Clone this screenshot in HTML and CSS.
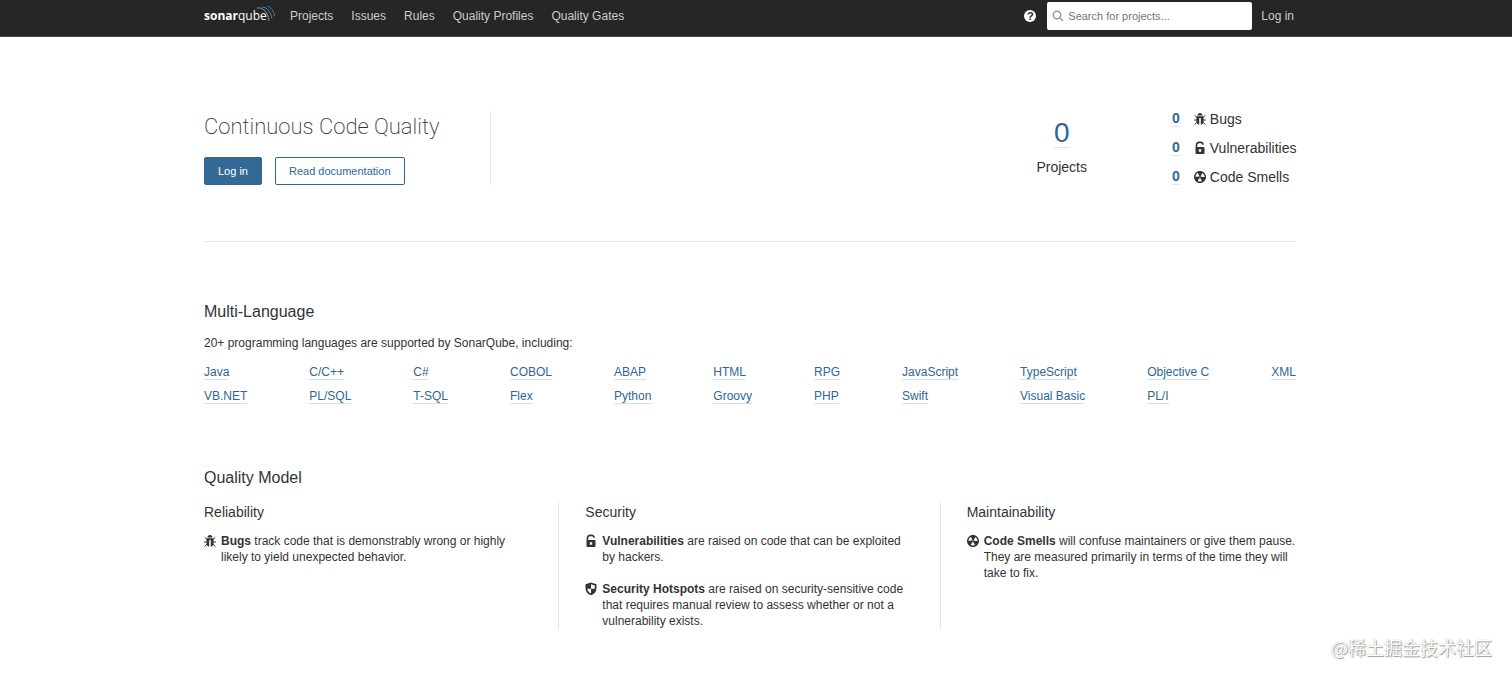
FILE: index.html
```html
<!DOCTYPE html>
<html lang="en">
<head>
  <meta charset="UTF-8">
  <meta name="viewport" content="width=device-width, initial-scale=1.0">
  <title>SonarQube</title>
  <link rel="stylesheet" href="styles.css">
</head>
<body>
  <!-- icons shared by the page -->
  <svg class="sprite" aria-hidden="true">
    <symbol id="icon-bug" viewBox="2 2 12 12" overflow="visible">
      <path d="M5.500 4.500C5.500 3 6.500 2 8 2s2.500 1 2.500 2.500zM4.500 5.300h7v5.200c0 1.600-.8 2.700-2.700 3.200V7H7.200v6.700c-1.900-.5-2.700-1.600-2.700-3.200z"/>
      <path d="M5 6.500L2.700 4.300M11 6.500l2.300-2.200M5 9H2M11 9h3M5 11l-2.300 2.500M11 11l2.300 2.500" fill="none" stroke="currentColor"/>
    </symbol>
    <symbol id="icon-lock" viewBox="2 2 12 12" overflow="visible">
      <path d="M4.500 8V4.900a2.500 2.500 0 0 1 2.500-2.500h1.800a2.300 2.300 0 0 1 2.300 2.300" fill="none" stroke="currentColor" stroke-width="1.600"/>
      <path fill-rule="evenodd" d="M4.500 7h7a1 1 0 0 1 1 1v5a1 1 0 0 1-1 1h-7a1 1 0 0 1-1-1V8a1 1 0 0 1 1-1zM6.800 9.300v2.400h2.400V9.300z"/>
    </symbol>
    <symbol id="icon-smell" viewBox="2 2 12 12" overflow="visible">
      <path d="M8 2C4.700 2 2 4.700 2 8s2.700 6 6 6 6-2.700 6-6-2.700-6-6-6zm-.5 5.500h.9v.9h-.9v-.9zm-3.800.2c-.1 0-.2-.1-.2-.2 0-.4.1-1.200.6-2S5.300 4.200 5.600 4c.2 0 .3 0 .3.1l1.300 2.300c0 .1 0 .2-.1.2-.1.2-.2.3-.3.5-.1.2-.2.4-.2.5 0 .1-.1.2-.2.2l-2.700-.1zM9.900 12c-.3.2-1.100.5-2 .5-.9 0-1.700-.3-2-.5-.1 0-.1-.2-.1-.3l1.300-2.300c0-.1.1-.1.2-.1.2.1.3.1.5.1s.4 0 .5-.1c.1 0 .2 0 .2.1l1.300 2.300c.2.2.2.3.1.3zm2.500-4.100L9.700 8c-.1 0-.2-.1-.2-.2 0-.2-.1-.4-.2-.5 0-.1-.2-.3-.3-.4-.1 0-.1-.1-.1-.2l1.300-2.300c.1-.1.2-.1.3-.1.3.2 1 .7 1.500 1.500s.6 1.600.6 2c0 0-.1.1-.2.1z"/>
    </symbol>
    <symbol id="icon-shield" viewBox="2 2 12 12" overflow="visible">
      <path fill-rule="evenodd" d="M8 1.600l5.500 1.700v4.200c0 3.300-2.400 5.500-5.500 6.800-3.100-1.300-5.500-3.500-5.500-6.800V3.300zM8 3.300v4.500H4.300c.2 2.200 1.700 3.700 3.700 4.800V7.800h3.800V4.500z"/>
    </symbol>
  </svg>

  <header class="navbar">
    <div class="container navbar-inner">
      <a class="logo" href="#" aria-label="SonarQube">
        <b>sonar</b><span>qube</span>
        <svg class="logo-waves" width="18" height="16" viewBox="0 0 18 16" fill="none">
          <path d="M0 2C6 1 11 6 12 15" stroke="#7d9bb3"/>
          <path d="M5 1C10 1 14 6 15 13" stroke="#4d81ab"/>
          <path d="M10 0C14 1 17 5 17.500 10" stroke="#4d81ab"/>
        </svg>
      </a>
      <nav class="menu">
        <a href="#">Projects</a>
        <a href="#">Issues</a>
        <a href="#">Rules</a>
        <a href="#">Quality Profiles</a>
        <a href="#">Quality Gates</a>
      </nav>
      <div class="navbar-right">
        <a class="help" href="#" aria-label="Help">?</a>
        <label class="search">
          <svg width="12" height="12" viewBox="0 0 12 12" fill="none" stroke="#999" stroke-width="1.500">
            <circle cx="5" cy="5" r="3.700"/>
            <path d="M8 8l3 3"/>
          </svg>
          <input type="search" placeholder="Search for projects..." aria-label="Search for projects">
        </label>
        <a class="login" href="#">Log in</a>
      </div>
    </div>
  </header>

  <main class="container">
    <section class="hero">
      <div class="intro">
        <h1>Continuous Code Quality</h1>
        <div class="actions">
          <button type="button" class="button button-primary">Log in</button>
          <button type="button" class="button">Read documentation</button>
        </div>
      </div>
      <div class="projects">
        <a href="#">0</a>
        <div>Projects</div>
      </div>
      <ul class="measures">
        <li><a href="#">0</a><svg class="icon"><use href="#icon-bug"/></svg>Bugs</li>
        <li><a href="#">0</a><svg class="icon"><use href="#icon-lock"/></svg>Vulnerabilities</li>
        <li><a href="#">0</a><svg class="icon"><use href="#icon-smell"/></svg>Code Smells</li>
      </ul>
    </section>

    <section class="languages">
      <h2>Multi-Language</h2>
      <p>20+ programming languages are supported by SonarQube, including:</p>
      <ul class="language-list">
        <li><a href="#">Java</a></li>
        <li><a href="#">VB.NET</a></li>
        <li><a href="#">C/C++</a></li>
        <li><a href="#">PL/SQL</a></li>
        <li><a href="#">C#</a></li>
        <li><a href="#">T-SQL</a></li>
        <li><a href="#">COBOL</a></li>
        <li><a href="#">Flex</a></li>
        <li><a href="#">ABAP</a></li>
        <li><a href="#">Python</a></li>
        <li><a href="#">HTML</a></li>
        <li><a href="#">Groovy</a></li>
        <li><a href="#">RPG</a></li>
        <li><a href="#">PHP</a></li>
        <li><a href="#">JavaScript</a></li>
        <li><a href="#">Swift</a></li>
        <li><a href="#">TypeScript</a></li>
        <li><a href="#">Visual Basic</a></li>
        <li><a href="#">Objective C</a></li>
        <li><a href="#">PL/I</a></li>
        <li><a href="#">XML</a></li>
      </ul>
    </section>

    <section class="quality">
      <h2>Quality Model</h2>
      <div class="columns">
        <div class="column">
          <h3>Reliability</h3>
          <div class="item">
            <svg class="icon"><use href="#icon-bug"/></svg>
            <p><b>Bugs</b> track code that is demonstrably wrong or highly likely to yield unexpected behavior.</p>
          </div>
        </div>
        <div class="column">
          <h3>Security</h3>
          <div class="item">
            <svg class="icon"><use href="#icon-lock"/></svg>
            <p><b>Vulnerabilities</b> are raised on code that can be exploited by hackers.</p>
          </div>
          <div class="item">
            <svg class="icon"><use href="#icon-shield"/></svg>
            <p><b>Security Hotspots</b> are raised on security-sensitive code that requires manual review to assess whether or not a vulnerability exists.</p>
          </div>
        </div>
        <div class="column">
          <h3>Maintainability</h3>
          <div class="item">
            <svg class="icon"><use href="#icon-smell"/></svg>
            <p><b>Code Smells</b> will confuse maintainers or give them pause. They are measured primarily in terms of the time they will take to fix.</p>
          </div>
        </div>
      </div>
    </section>
  </main>

  <div class="watermark">@稀土掘金技术社区</div>
</body>
</html>
```
FILE: styles.css
```css
* {
  box-sizing: border-box;
}
body {
  position: relative;
  min-height: 100vh;
  margin: 0;
  background: #fff;
  color: #333;
  font-family: "Liberation Sans", Arial, sans-serif;
  font-size: 12px;
  line-height: 16px;
}
a {
  color: #2d6795;
  text-decoration: none;
}
h1, h2, h3, p, ul {
  margin: 0;
  padding: 0;
  font-weight: 400;
}
ul {
  list-style: none;
}
.sprite {
  position: absolute;
  width: 0;
  height: 0;
}
.icon {
  flex: none;
  width: 12px;
  height: 12px;
  fill: currentColor;
  overflow: visible;
}
.container {
  max-width: 1092px;
  margin: 0 auto;
}
.navbar,
main {
  padding-right: 12px;
}

/* top bar */
.navbar {
  background: #262626;
  border-bottom: 1px solid #444;
}
.navbar-inner {
  display: flex;
  height: 36px;
  padding-bottom: 4px;
  align-items: center;
}
.navbar a {
  color: #ccc;
}
.navbar .logo {
  display: flex;
  width: 70px;
  margin-right: 16px;
  color: #fff;
  font-family: "Open Sans", sans-serif;
  font-size: 12px;
}
.logo-waves {
  flex: none;
  margin: -2px 0 0 -10px;
}
.menu {
  display: flex;
  gap: 18px;
}
.navbar-right {
  display: flex;
  align-items: center;
  margin: 0 2px 0 auto;
}
.navbar .help {
  width: 12px;
  height: 12px;
  margin-right: 11px;
  border-radius: 50%;
  background: #fff;
  color: #262626;
  font-size: 11px;
  font-weight: 700;
  line-height: 12px;
  text-align: center;
}
.search {
  display: flex;
  align-items: center;
  gap: 4px;
  width: 205px;
  height: 28px;
  margin-right: 9px;
  padding: 0 5px;
  border-radius: 2px;
  background: #fff;
}
.search input {
  flex: 1;
  min-width: 0;
  padding: 0;
  border: 0;
  outline: 0;
  background: none;
  font-family: inherit;
  font-size: 11px;
}
.search input::placeholder {
  color: #757575;
}

/* intro and counters */
main.container {
  max-width: 1104px;
}
.hero {
  display: flex;
  padding: 74px 0 50px;
  border-bottom: 1px solid #e6e6e6;
}
.intro {
  width: 287px;
  height: 74px;
  border-right: 1px solid #e6e6e6;
}
.intro h1 {
  margin-bottom: 14px;
  font-family: Roboto, sans-serif;
  font-size: 22px;
  font-weight: 200;
  line-height: 32px;
  white-space: nowrap;
}
.actions {
  display: flex;
  gap: 13px;
}
.button {
  height: 28px;
  padding: 0 13px;
  border: 1px solid #2d6795;
  border-radius: 2px;
  background: #fff;
  color: #2d6795;
  font-family: inherit;
  font-size: 11px;
  cursor: pointer;
}
.button-primary {
  background: #336a95;
  color: #fff;
}
.projects {
  margin-left: auto;
  padding-top: 8px;
  font-size: 14px;
  text-align: center;
}
.projects a {
  display: inline-block;
  margin-bottom: 11px;
  border-bottom: 1px solid #dbe6ee;
  font-size: 28px;
  line-height: 28px;
}
.measures {
  width: 124px;
  margin-left: 85px;
  font-size: 14px;
}
.measures li {
  display: flex;
  align-items: center;
  gap: 4px;
  height: 29px;
  white-space: nowrap;
}
.measures li:first-child {
  margin-top: -7px;
}
.measures a {
  margin-right: 10px;
  border-bottom: 1px solid #dbe6ee;
  font-weight: 700;
}

/* languages */
.languages {
  padding-top: 60px;
}
h2 {
  font-size: 16px;
  line-height: 20px;
}
.languages p {
  margin: 13px 0 9px;
}
.language-list {
  display: grid;
  grid-template-rows: 24px 24px;
  grid-auto-flow: column;
  grid-auto-columns: auto;
  justify-content: space-between;
  align-items: center;
}
.language-list a {
  border-bottom: 1px solid #d3e1ea;
}

/* quality model */
.quality {
  padding-top: 60px;
}
.columns {
  display: flex;
  margin-top: 14px;
}
.column {
  flex: 1;
  box-sizing: content-box;
  padding-right: 25px;
}
.column + .column {
  padding-left: 26px;
  border-left: 1px solid #e6e6e6;
}
.column:last-child {
  padding-right: 0;
}
h3 {
  margin-bottom: 11px;
  font-size: 14px;
  line-height: 20px;
}
.item {
  display: flex;
  gap: 5px;
}
.item + .item {
  margin-top: 16px;
}
.item .icon {
  margin-top: 2px;
}

.watermark {
  position: absolute;
  right: 20px;
  bottom: 18px;
  color: #fff;
  font-family: "Noto Sans CJK SC", sans-serif;
  font-size: 18px;
  line-height: 26px;
  text-shadow: 1px 1px 1px #999, 0 0 1px #999;
}
```
